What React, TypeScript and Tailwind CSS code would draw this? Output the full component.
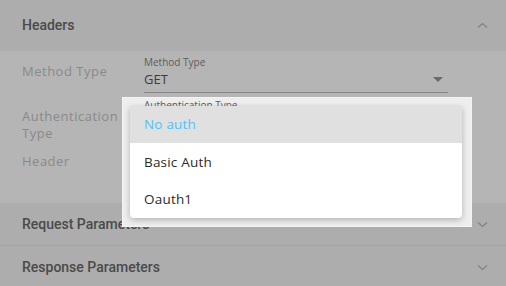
import React from "react";

const sans = { fontFamily: "'Open Sans', sans-serif" };
const roboto = { fontFamily: "Roboto, sans-serif" };

function Chevron({ up }: { up?: boolean }) {
  return (
    <svg width="11" height="7" viewBox="0 0 11 7" className="text-[#808080]">
      <polyline
        points={up ? "1,5.5 5.5,1.5 10,5.5" : "1,1.5 5.5,5.5 10,1.5"}
        fill="none"
        stroke="currentColor"
        strokeWidth="1.1"
      />
    </svg>
  );
}

function Section({ title, up }: { title: string; up?: boolean }) {
  return (
    <div className="flex items-center justify-between pl-[22px] pr-[18px] bg-[#adadad] h-[43px] border-b border-[#a6a6a6]">
      <span style={roboto} className="text-[14px] font-medium text-[#4a4a4a]">
        {title}
      </span>
      <Chevron up={up} />
    </div>
  );
}

export default function App() {
  return (
    <div className="relative w-[506px] h-[286px] overflow-hidden bg-[#adadad]">
      <div className="flex items-center justify-between pl-[22px] pr-[18px] bg-[#adadad] h-[51px] shadow-[0_1px_1px_rgba(0,0,0,0.06)]">
        <span style={roboto} className="text-[14px] font-medium text-[#4a4a4a]">
          Headers
        </span>
        <Chevron up />
      </div>

      <div style={sans} className="h-[152px] bg-[#b5b5b5] pl-[22px] pt-[5px]">
        <div className="flex">
          <div className="w-[122px] pt-[6px] text-[13px] tracking-[0.5px] text-[#8a8a8a]">Method Type</div>
          <div className="w-[304px] border-b border-[#858585] h-[37px]">
            <div className="text-[10px] leading-[12px] text-[#5c5c5c]">Method Type</div>
            <div className="flex items-center justify-between pr-[5px] mt-[2px]">
              <span className="text-[13px] text-[#3c3c3c]">GET</span>
              <svg width="10" height="5" viewBox="0 0 10 5">
                <polygon points="0,0 10,0 5,5" fill="#6a6a6a" />
              </svg>
            </div>
          </div>
        </div>
        <div className="mt-[15px] text-[13px] tracking-[0.5px] leading-[17px] text-[#8a8a8a] w-[100px]">
          Authentication Type
        </div>
        <div className="mt-[10px] text-[13px] tracking-[0.5px] text-[#8a8a8a]">Header</div>
      </div>

      <Section title="Request Parameters" />
      <Section title="Response Parameters" />

      <div className="absolute left-[122px] top-[97px] w-[350px] h-[130px] bg-[#eeeeee] border border-[#f4f4f4] overflow-hidden">
        <div style={sans} className="absolute left-[21px] top-[1px] text-[10px] leading-[12px] text-[#5c5c5c]">
          Authentication Type
        </div>
      </div>

      <div
        style={sans}
        className="absolute left-[130px] top-[106px] w-[332px] h-[112px] bg-white rounded-b-[4px] overflow-hidden shadow-[0_2px_6px_rgba(0,0,0,0.25)]"
      >
        <div className="h-[37px] bg-[#e0e0e0] flex items-center pl-[14px] text-[13.5px] tracking-[0.2px] text-[#4fc3f7]">No auth</div>
        <div className="h-[38px] flex items-center pl-[14px] text-[13.5px] tracking-[0.2px] text-[#2b2b2b]">Basic Auth</div>
        <div className="h-[37px] flex items-center pl-[14px] text-[13.5px] tracking-[0.2px] text-[#2b2b2b]">Oauth1</div>
      </div>
    </div>
  );
}
